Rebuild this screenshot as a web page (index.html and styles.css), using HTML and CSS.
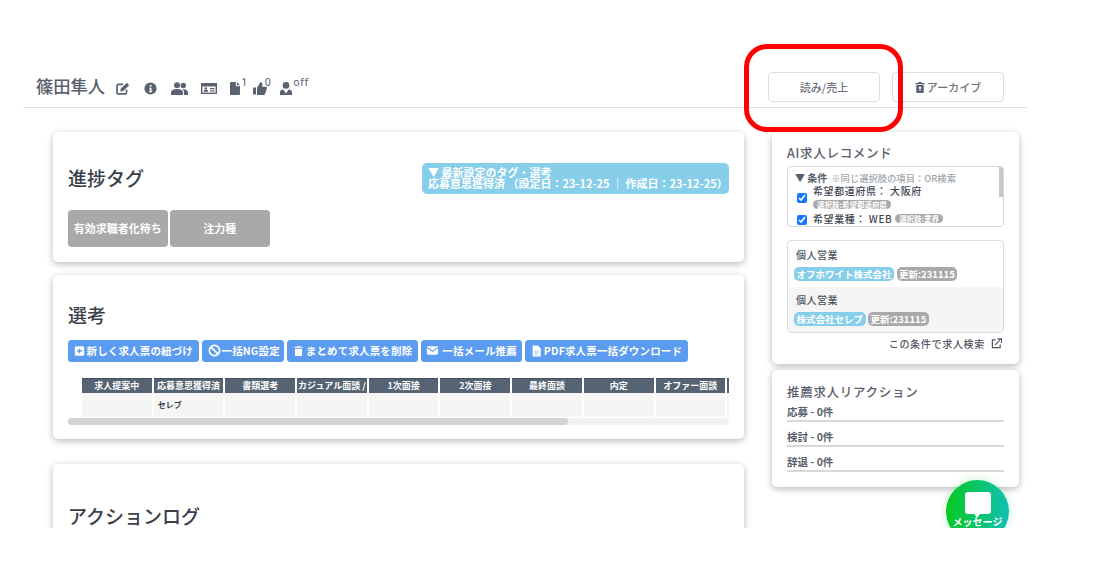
FILE: index.html
```html
<!DOCTYPE html>
<html lang="ja">
<head>
<meta charset="utf-8">
<title>篠田隼人</title>
<link rel="stylesheet" href="styles.css">
</head>
<body>
<div class="app">
  <header class="head">
    <div class="who">
      <h1 class="name">篠田隼人</h1>
      <svg class="hi hi-edit" viewBox="0 0 14 13"><path d="M10.500 7.500v3.200a1.200 1.200 0 0 1-1.200 1.200H2.200A1.200 1.200 0 0 1 1 10.700V3.600a1.200 1.200 0 0 1 1.200-1.200H7" fill="none" stroke="#5a6270" stroke-width="1.700"/><path d="M4.700 6.700L10.800.8l2.400 2.400-6 5.900-2.800.4z" fill="#5a6270"/></svg>
      <svg class="hi hi-info" viewBox="0 0 16 16"><circle cx="8" cy="8" r="7.500" fill="#5a6270"/><path d="M6.500 7h2.700v4.300h1V12.500h-4v-1.200h1V8.200h-.7z" fill="#fff"/><rect x="7" y="3.500" width="2.200" height="2.200" fill="#fff"/></svg>
      <svg class="hi hi-users" viewBox="0 0 17 13"><circle cx="6" cy="3.200" r="3" fill="#5a6270"/><circle cx="12.300" cy="3.500" r="2.700" fill="#5a6270"/><path d="M0 13v-2.500C0 8.200 2 7 6 7s6 1.200 6 3.500V13zM13 13v-2.500c0-1.300-.5-2.300-1.500-3.200 .3-.1.700-.1 1-.1 2.800 0 4.500 1.200 4.500 3.300V13z" fill="#5a6270"/></svg>
      <svg class="hi hi-card" viewBox="0 0 16 11"><rect x=".7" y=".7" width="14.600" height="9.600" fill="#fff" stroke="#5a6270" stroke-width="1.400"/><rect x="1" y="1" width="14" height="2.500" fill="#5a6270"/><circle cx="4.800" cy="5.500" r="1.300" fill="#5a6270"/><rect x="2.800" y="7" width="4" height="1.800" fill="#5a6270"/><rect x="9" y="5" width="4.500" height="1.200" fill="#5a6270"/><rect x="9" y="7.300" width="4.500" height="1.200" fill="#5a6270"/></svg>
      <span class="stat stat-file">
        <svg class="hi hi-file" viewBox="0 0 10 13"><path d="M0 1a1 1 0 0 1 1-1h4.800v3.600a.6.600 0 0 0 .6.600H10v7.800a1 1 0 0 1-1 1H1a1 1 0 0 1-1-1z" fill="#5a6270"/><path d="M6.800 0L10 3.200H6.800z" fill="#5a6270"/></svg><sup class="cnt">1</sup>
      </span>
      <span class="stat stat-thumb">
        <svg class="hi hi-thumb" viewBox="0 0 14 13"><rect x="0" y="5.500" width="3" height="7" rx=".5" fill="#5a6270"/><path d="M4 5.800L7.300.3c1.300-.3 2.300.5 2.200 2L9 4.800h3.600c1 0 1.600.9 1.300 1.800l-1.700 5.200c-.2.700-.8 1.200-1.500 1.200H4z" fill="#5a6270"/></svg><sup class="cnt">0</sup>
      </span>
      <span class="stat">
        <svg class="hi hi-agent" viewBox="0 0 12 13"><circle cx="6" cy="3.400" r="3.300" fill="#5a6270"/><path d="M0 13v-2.500C0 8.800 1.300 7.600 3.300 7.600L6 11.500l2.700-3.900c2 0 3.300 1.200 3.300 2.900V13z" fill="#5a6270"/></svg><sup class="cnt">off</sup>
      </span>
    </div>
    <div class="head-actions">
      <button class="outline">読み/売上</button>
      <button class="outline"><svg class="arch" viewBox="0 0 12 14"><path d="M4 1.500V.500h4v1h3.500V3H.5V1.500zM1.500 4h9v8.500a1 1 0 0 1-1 1h-7a1 1 0 0 1-1-1z" fill="#5a6270"/><path d="M6 5.500L3.800 8h1.500v3h1.400V8h1.500z" fill="#fff"/></svg>アーカイブ</button>
    </div>
  </header>

  <div class="layout">
    <main class="left">
      <section class="card card-tags">
        <div class="tag-top">
          <h2 class="title">進捗タグ</h2>
          <div class="latest">
            <div class="latest-l1">▼ 最新設定のタグ・選考</div>
            <div class="latest-l2">応募意思獲得済 （設定日：23-12-25 ｜ 作成日：23-12-25）</div>
          </div>
        </div>
        <div class="tags">
          <span class="tag">有効求職者化待ち</span>
          <span class="tag">注力種</span>
        </div>
      </section>

      <section class="card card-sel">
        <h2 class="title">選考</h2>
        <div class="btns">
          <button class="blue"><svg class="bi" viewBox="0 0 14 14"><rect x="1" y="1" width="12" height="12" rx="2" fill="#fff"/><path d="M7 4v6M4 7h6" stroke="#5b9bf0" stroke-width="1.800"/></svg>新しく求人票の紐づけ</button>
          <button class="blue blue-ng"><svg class="bi" viewBox="0 0 14 14"><circle cx="7" cy="7" r="5.500" fill="none" stroke="#fff" stroke-width="1.800"/><path d="M3 3l8 8" stroke="#fff" stroke-width="1.800"/></svg>一括NG設定</button>
          <button class="blue"><svg class="bi" viewBox="0 0 14 14"><path d="M1.500 1.500h3.500v-1h4v1h3.500V3h-11zM2.500 4h9v8.500a1 1 0 0 1-1 1h-7a1 1 0 0 1-1-1z" fill="#fff"/></svg>まとめて求人票を削除</button>
          <button class="blue blue-mail"><svg class="bi" viewBox="0 0 14 14"><rect x="1" y="2.500" width="12" height="9" rx="1.500" fill="#fff"/><path d="M1.500 4L7 8l5.500-4" fill="none" stroke="#5b9bf0" stroke-width="1.200"/></svg>一括メール推薦</button>
          <button class="blue"><svg class="bi" viewBox="0 0 12 14"><path d="M1.500.5h6l3.500 3.500v9.500h-9.500z" fill="#fff"/><path d="M3.500 7h5M3.500 9h5M3.500 11h3" stroke="#9cc3f6" stroke-width="1"/></svg>PDF求人票一括ダウンロード</button>
        </div>
        <div class="scroller">
          <table class="flow">
            <thead>
              <tr><th>求人提案中</th><th>応募意思獲得済</th><th>書類選考</th><th>カジュアル面談 / </th><th>1次面接</th><th>2次面接</th><th>最終面談</th><th>内定</th><th>オファー面談</th><th></th></tr>
            </thead>
            <tbody>
              <tr><td></td><td>セレブ</td><td></td><td></td><td></td><td></td><td></td><td></td><td></td><td></td></tr>
            </tbody>
          </table>
        </div>
        <div class="track"><div class="thumb"></div></div>
      </section>

      <section class="card card-log">
        <h2 class="title">アクションログ</h2>
      </section>
    </main>

    <aside class="right">
      <section class="card side side-ai">
        <h3 class="side-title">AI求人レコメンド</h3>
        <div class="cond">
          <div class="cond-in">
            <div class="cond-head"><b>▼ 条件</b><small>※同じ選択肢の項目：OR検索</small></div>
            <div class="cond-row">
              <input type="checkbox" checked>
              <div class="cond-text">
                <div class="cond-main">希望都道府県： 大阪府</div>
                <span class="pill">選択肢:希望都道府県</span>
              </div>
            </div>
            <div class="cond-row cond-row2">
              <input type="checkbox" checked>
              <div class="cond-main">希望業種： WEB <span class="pill">選択肢:業界</span></div>
            </div>
          </div>
          <div class="cond-bar"></div>
        </div>
        <div class="jobs">
          <div class="job">
            <div class="job-name">個人営業</div>
            <div class="job-tags"><span class="jb">オフホワイト株式会社</span><span class="jg">更新:231115</span></div>
          </div>
          <div class="job job-alt">
            <div class="job-name">個人営業</div>
            <div class="job-tags"><span class="jb">株式会社セレブ</span><span class="jg">更新:231115</span></div>
          </div>
        </div>
        <div class="search-link">この条件で求人検索<svg class="ext" viewBox="0 0 12 12"><path d="M5 2H1.500v8.500H10V7" fill="none" stroke="#4f5662" stroke-width="1.300"/><path d="M4.500 7.500L10.500 1.500M7 1h4.500v4.500" fill="none" stroke="#4f5662" stroke-width="1.300"/></svg></div>
      </section>
      <section class="card side side-react">
        <h3 class="side-title">推薦求人リアクション</h3>
        <div class="react">応募 - 0件</div>
        <div class="react">検討 - 0件</div>
        <div class="react">辞退 - 0件</div>
      </section>
    </aside>
  </div>

  <div class="fab">
    <svg class="fab-ic" viewBox="0 0 26 26"><path d="M3 0h20a3 3 0 0 1 3 3v16a3 3 0 0 1-3 3H15l-3 4-2.500-4H3a3 3 0 0 1-3-3V3a3 3 0 0 1 3-3z" fill="#fff"/></svg>
    <span class="fab-t">メッセージ</span>
  </div>
</div>
<div class="mark"></div>
</body>
</html>
```
FILE: styles.css
```css
* { box-sizing: border-box; }
html, body { margin: 0; padding: 0; background: #fff; }
body {
  font-family: "Noto Sans CJK JP", "Noto Sans", sans-serif;
  color: #4f5662;
  width: 1102px;
  height: 585px;
  overflow: hidden;
  position: relative;
}
.app {
  position: relative;
  height: 528px;
  overflow: hidden;
  padding: 70px 75px 0 23px;
}
.head {
  display: flex;
  justify-content: space-between;
  align-items: flex-start;
  height: 37.500px;
  border-bottom: 1.500px solid #dfdfdf;
  padding: 2px 23px 0 13px;
}
.who { display: flex; align-items: center; height: 30px; }
.name { margin: -2px 11px 0 0; font-size: 17.300px; font-weight: 500; color: #59606c; line-height: 30px; }
.hi { display: block; flex: none; }
.hi-edit { width: 14px; height: 13px; margin: 3px 14px 0 0; }
.hi-info { width: 13px; height: 13px; margin: 3px 14px 0 0; }
.hi-users { width: 17px; height: 13px; margin: 3px 13px 0 0; }
.hi-card { width: 16px; height: 11px; margin: 3px 13px 0 0; }
.hi-file { width: 10px; height: 13px; }
.hi-thumb { width: 14px; height: 13px; }
.hi-agent { width: 12px; height: 13px; }
.stat { display: flex; align-items: flex-start; height: 18px; margin-top: 4px; }
.stat-file { margin-right: 5px; }
.stat-thumb { margin-right: 9px; }
.stat .hi { margin-top: 2px; }
.cnt { font-size: 10.500px; line-height: 1; margin: -3px 0 0 1px; color: #5a6270; letter-spacing: .6px; font-family: "Noto Sans", sans-serif; }
.stat-thumb .cnt { margin-left: -2px; }
.head-actions { display: flex; gap: 12px; }
.outline {
  width: 112px; height: 30px;
  background: #fff;
  border: 1px solid #dcdcdc;
  border-radius: 4px;
  font: 500 11px "Noto Sans CJK JP", sans-serif;
  color: #6b717c;
  display: flex; align-items: center; justify-content: center;
  padding: 0;
}
.arch { width: 10px; height: 13px; margin-right: 2px; }

.layout { display: flex; align-items: flex-start; gap: 28px; padding: 24px 0 0 30px; }
.left { width: 691px; flex: none; }
.right { width: 247px; flex: none; }
.card {
  background: #fff;
  border-radius: 5px;
  box-shadow: 0 2px 7px rgba(0,0,0,.28);
}
.title { margin: 0; font-size: 19px; font-weight: 500; color: #3a404b; line-height: 26px; }

.card-tags { height: 130px; padding: 31px 15px 0; margin-bottom: 13px; }
.tag-top { display: flex; justify-content: space-between; align-items: flex-start; height: 47px; }
.tag-top .title { padding-top: 2px; }
.latest {
  width: 307px; height: 31px;
  background: #87ceeb;
  border-radius: 5px;
  color: #fff;
  font-size: 11px;
  font-weight: 700;
  line-height: 11px;
  padding: 4px 0 0 6px;
  white-space: nowrap;
}
.tags { display: flex; gap: 2.500px; }
.tag {
  width: 99.500px; height: 37px;
  background: #a9a9a9;
  color: #fff;
  border-radius: 4px;
  font-size: 11px;
  font-weight: 700;
  display: flex; align-items: center; justify-content: center;
}

.card-sel { height: 164px; padding: 27px 15px 0; margin-bottom: 25px; }
.btns { display: flex; gap: 3px; margin-top: 12px; }
.blue {
  height: 22px;
  background: #5b9bf0;
  color: #fff;
  border: 0;
  border-radius: 3.500px;
  font: 700 10.500px "Noto Sans CJK JP", sans-serif;
  letter-spacing: .15px;
  display: flex; align-items: center;
  padding: 0 5.500px;
  white-space: nowrap;
}
.bi { width: 11px; height: 12px; margin-right: 2px; flex: none; }
.blue-ng .bi { width: 13px; height: 13px; margin-right: 1px; }
.blue-ng { padding: 0 4.500px 0 6px; }
.blue-mail .bi { width: 13px; height: 13px; margin-right: 3px; }
.scroller { margin-top: 16px; padding-left: 14px; overflow: hidden; width: 661px; }
.flow { border-collapse: separate; border-spacing: 2px 0; table-layout: fixed; width: 719px; margin-left: -2px; }
.flow th {
  width: 69.700px;
  height: 15px;
  background: #566373;
  color: #fff;
  font-size: 9px;
  font-weight: 700;
  padding: 0;
  white-space: nowrap;
  overflow: hidden;
  border-top: 1px solid #46505e;
}
.flow td {
  height: 24px;
  background: #f5f5f5;
  font-size: 8px;
  font-weight: 700;
  color: #3a404b;
  padding: 0 0 0 4px;
}
.track { height: 7px; width: 661px; background: #f1f1f1; border-radius: 4px; margin-top: 1px; }
.thumb { width: 500px; height: 7px; background: #d3d3d3; border-radius: 4px; }

.card-log { height: 100px; padding: 39px 15px 0; }

.side { padding: 12px 15px 0; }
.side-ai { height: 232px; margin-bottom: 6px; }
.side-title { margin: 0; font-size: 12.500px; font-weight: 500; color: #59606c; line-height: 18px; letter-spacing: .7px; }
.cond {
  height: 61px;
  width: 217px;
  margin-top: 4px;
  border: 1px solid #d8d8d8;
  border-radius: 4px;
  display: flex;
  overflow: hidden;
}
.cond-in { flex: 1; padding: 4px 0 0 7px; min-width: 0; }
.cond-bar { width: 4px; height: 30px; background: #c8c8c8; }
.cond-head { line-height: 13px; font-size: 10px; color: #59606c; white-space: nowrap; }
.cond-head b { font-weight: 700; }
.cond-head small { font-size: 9.300px; color: #a0a4aa; margin-left: 4px; font-weight: 500; }
.cond-row { display: flex; align-items: flex-start; }
.cond-row input { width: 10px; height: 10px; margin: 8px 6px 0 2px; flex: none; accent-color: #1677ff; }
.cond-row2 { margin-top: 3px; }
.cond-row2 input { margin-top: 3px; }
.cond-main { font-size: 10px; line-height: 12px; font-weight: 500; color: #3f4551; white-space: nowrap; letter-spacing: .6px; }
.cond-row2 .cond-main { line-height: 14px; }
.pill {
  display: inline-block;
  background: #a9a9a9;
  color: #fff;
  font-size: 7.500px;
  line-height: 9px;
  height: 9px;
  padding: 0 4px;
  border-radius: 5px;
  font-weight: 700;
  letter-spacing: 0;
  vertical-align: 1px;
}
.cond-text .pill { display: block; width: fit-content; margin-top: 3px; }
.jobs {
  width: 217px;
  margin-top: 13px;
  border: 1px solid #dcdcdc;
  border-radius: 4px;
  overflow: hidden;
}
.job { height: 46px; padding: 6px 0 0 6px; }
.job-alt { background: #f5f5f5; height: 45px; padding-top: 5px; }
.job-name { font-size: 10px; line-height: 15px; font-weight: 500; color: #4f5662; letter-spacing: .5px; padding-left: 2px; margin-bottom: 5px; }
.job-tags { display: flex; gap: 2.500px; }
.jb, .jg {
  height: 14px;
  border-radius: 5px;
  color: #fff;
  font-size: 9.500px;
  font-weight: 700;
  line-height: 14px;
  padding: 0 2.500px;
  white-space: nowrap;
}
.jb { background: #87ceeb; }
.jg { background: #a9a9a9; }
.search-link {
  width: 215px;
  display: flex; align-items: center; justify-content: flex-end;
  font-size: 10px;
  font-weight: 500;
  color: #4f5662;
  line-height: 14px;
  margin-top: 4px;
  letter-spacing: .7px;
}
.ext { width: 11px; height: 11px; margin-left: 6px; }
.side-react { height: 117px; padding-top: 13px; }
.react {
  width: 217px;
  height: 25px;
  padding-top: 8px;
  font-size: 10.500px;
  line-height: 14px;
  font-weight: 700;
  color: #59606c;
  border-bottom: 2px solid #d8d8d8;
}
.side-title + .react { height: 21px; padding-top: 4px; }

.fab {
  position: absolute;
  left: 946px; top: 480px;
  width: 63px; height: 63px;
  border-radius: 50%;
  background: linear-gradient(90deg, #06c91f 0%, #0fc0b4 100%);
  box-shadow: 0 0 8px rgba(6,201,31,.25);
  display: flex; flex-direction: column; align-items: center;
  padding-top: 12px;
}
.fab-ic { width: 26px; height: 26px; display: block; }
.fab-t { color: #fff; font-size: 10px; font-weight: 700; line-height: 12px; margin-top: -2px; white-space: nowrap; }

.mark {
  position: absolute;
  left: 744px; top: 44px;
  width: 159px; height: 88px;
  border: 5px solid #f00;
  border-radius: 23px;
}
```
